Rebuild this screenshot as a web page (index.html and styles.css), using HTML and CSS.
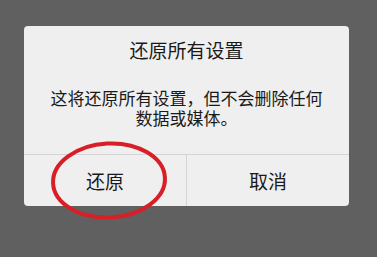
FILE: index.html
```html
<!DOCTYPE html>
<html lang="zh-CN">
<head>
<meta charset="utf-8">
<link rel="stylesheet" href="styles.css">
</head>
<body>
<div class="screen">
  <div class="dialog">
    <div class="title">还原所有设置</div>
    <div class="message">这将还原所有设置，但不会删除任何数据或媒体。</div>
    <div class="actions">
      <div class="btn">还原</div>
      <div class="btn">取消</div>
    </div>
  </div>
  <svg class="circle" width="377" height="257" viewBox="0 0 377 257">
    <ellipse cx="109" cy="180.5" rx="56" ry="37" transform="rotate(-3 109 180.5)" fill="none" stroke="#d71f27" stroke-width="4"/>
  </svg>
</div>
</body>
</html>
```
FILE: styles.css
```css
html, body {
  margin: 0;
  padding: 0;
}
body {
  background: #606060;
  font-family: "Noto Sans CJK SC", "Noto Sans", sans-serif;
  color: #1a1a1a;
}
.screen {
  position: relative;
  width: 377px;
  height: 257px;
  overflow: hidden;
  padding-top: 26px;
  box-sizing: border-box;
}
.dialog {
  margin-left: 24px;
  width: 325px;
  background: #efefef;
  border-radius: 4px;
  overflow: hidden;
}
.title {
  padding-top: 14px;
  font-size: 19px;
  line-height: 20px;
  height: 20px;
  text-align: center;
}
.message {
  margin: 28px auto 0;
  width: 280px;
  font-size: 17px;
  line-height: 20px;
  text-align: center;
  padding-bottom: 26px;
}
.actions {
  display: flex;
  border-top: 1px solid #d4d4d4;
  height: 51px;
}
.btn {
  flex: 1;
  display: flex;
  align-items: center;
  justify-content: center;
  font-size: 19px;
}
.btn + .btn {
  border-left: 1px solid #d4d4d4;
}
.circle {
  position: absolute;
  left: 0;
  top: 0;
}
```
